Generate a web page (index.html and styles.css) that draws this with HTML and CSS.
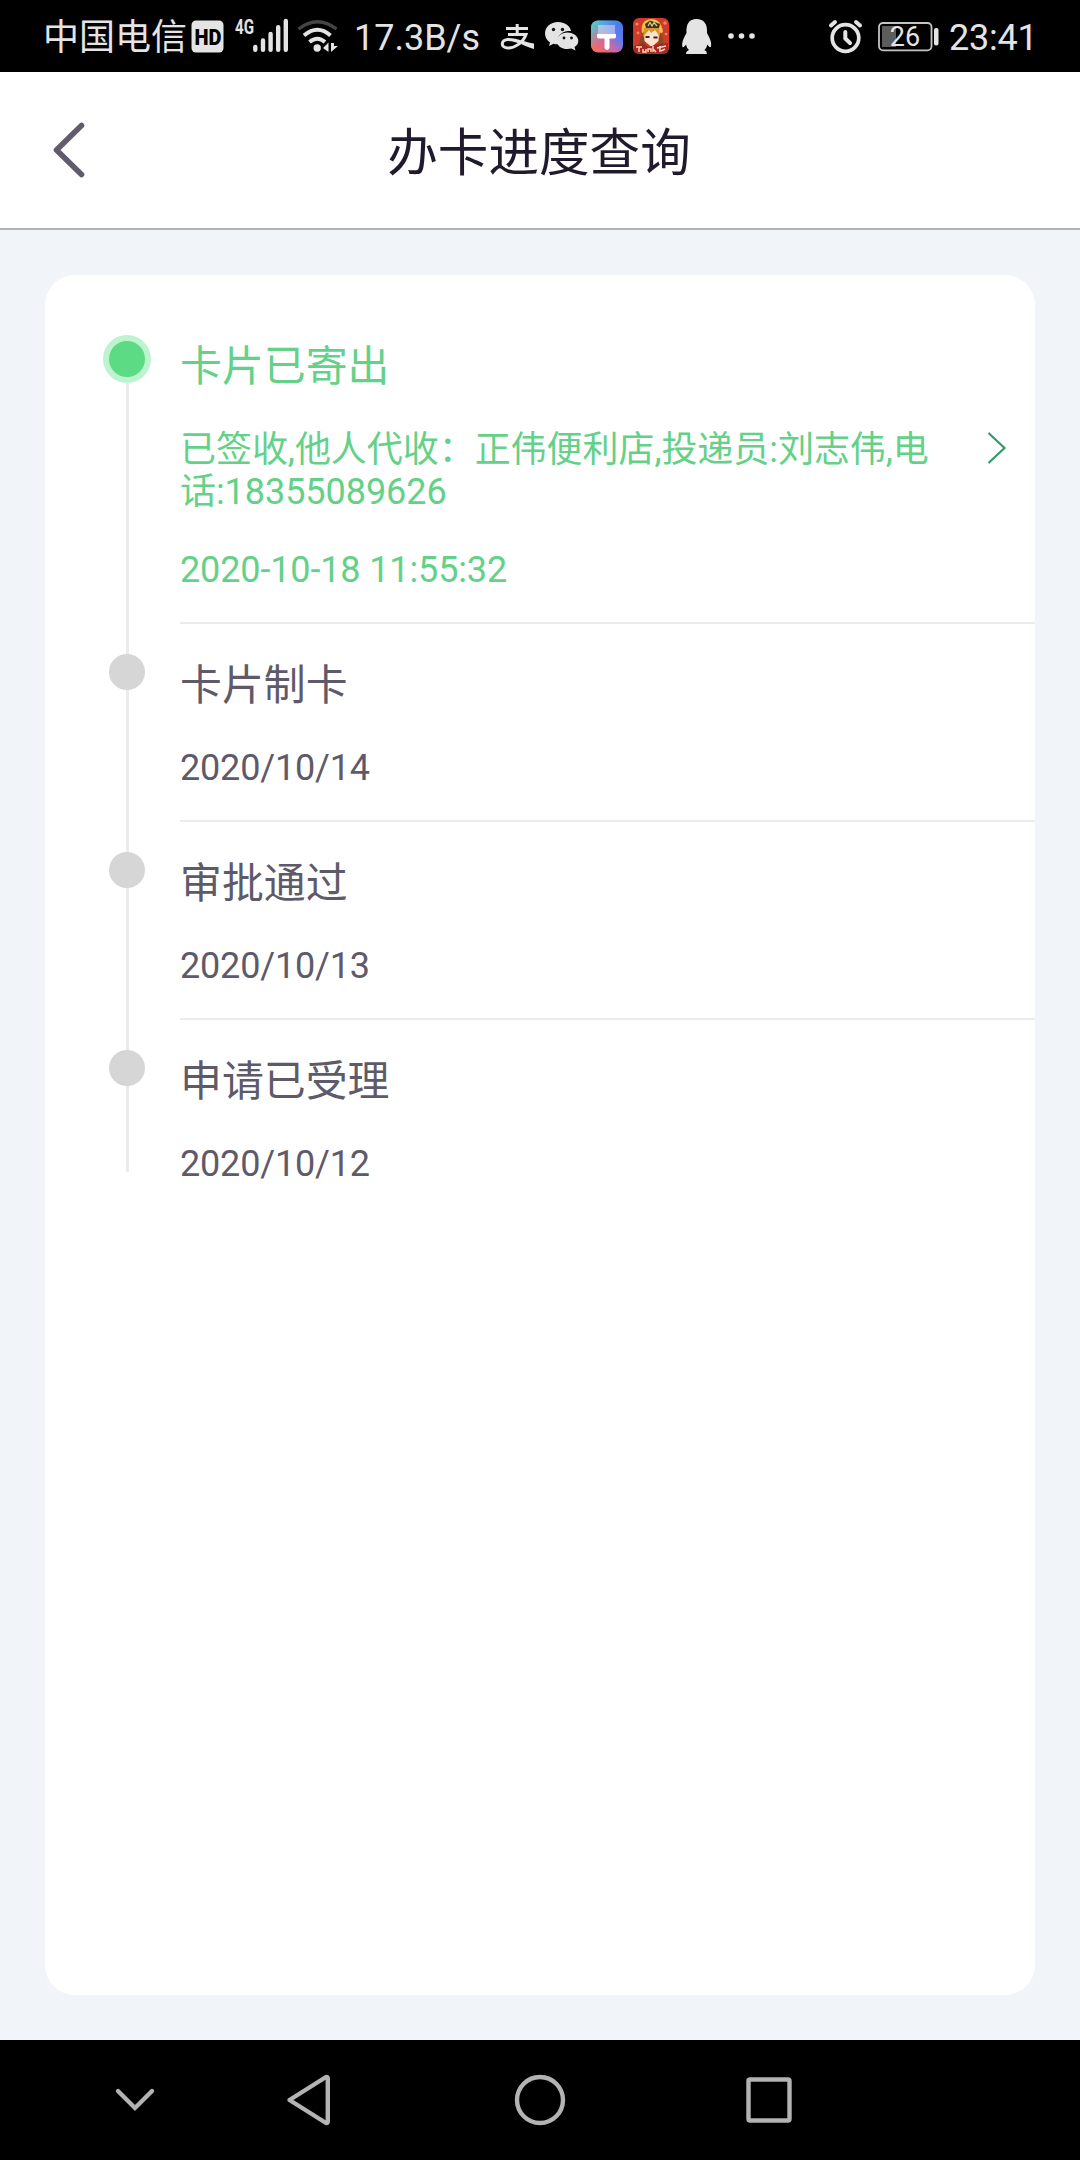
FILE: index.html
```html
<!DOCTYPE html>
<html lang="zh-CN">
<head>
<meta charset="utf-8">
<title>办卡进度查询</title>
<link rel="stylesheet" href="styles.css">
</head>
<body>
<div class="status">
  <span class="carrier">中国电信</span>
  <svg class="signals" width="155" height="72" viewBox="187 0 155 72">
    <rect x="191.5" y="20.5" width="32" height="32" rx="4.5" fill="#e4e4e4"/>
    <text x="194.5" y="44.500" class="hd" textLength="27" lengthAdjust="spacingAndGlyphs">HD</text>
    <text x="235" y="34" class="net" textLength="19" lengthAdjust="spacingAndGlyphs">4G</text>
    <g stroke="#e4e4e4" stroke-width="4.4" stroke-linecap="round">
      <path d="M255.3 47V49.8M263 40.4V49.8M270.6 34V49.8M278.2 27.2V49.8M285.8 21V49.8"/>
    </g>
    <g fill="none" stroke="#e4e4e4" stroke-width="4">
      <path d="M298.5 29Q317.500 14.500 336.500 29" stroke="#454545" stroke-width="3.4"/>
      <path d="M304 35.500Q317.500 24 330.500 35.500"/>
      <path d="M309.500 42Q317.500 35.500 325 42"/>
    </g>
    <circle cx="317.2" cy="48" r="3.7" fill="#e4e4e4"/>
    <path d="M323 48L328.500 42.500V52ZM331 43L331 52L338 46H334V43Z" fill="#e4e4e4"/>
  </svg>
  <span class="speed">17.3B/s</span>
  <svg class="apps" width="270" height="72" viewBox="495 0 270 72">
    <defs>
      <linearGradient id="brush" x1="0" y1="1" x2="1" y2="0"><stop offset="0" stop-color="#ff7043"/><stop offset=".38" stop-color="#d565a0"/><stop offset=".65" stop-color="#647bea"/><stop offset="1" stop-color="#3d79ee"/></linearGradient>
      <linearGradient id="mint" x1="0" y1="0" x2=".65" y2=".65"><stop offset="0" stop-color="#48dcc0"/><stop offset=".75" stop-color="#48c4e0" stop-opacity="0"/></linearGradient>
    </defs>
    <g fill="none" stroke="#e4e4e4" stroke-width="3">
      <path d="M506 28.500H528M517.200 24V34M508 34.500H526C523 43 514 48.500 507.500 48C500 47.500 501 39.500 508 39.500"/>
    </g>
    <path d="M507 38C517 37.500 525 42.500 534 43.500V49C525 46.500 516 40.500 507 41Z" fill="#e4e4e4"/>
    <g fill="#e4e4e4">
      <path d="M558 22C550.500 22 545 27 545 33.500C545 37.500 547 40.500 550 42.500L549 46L553.500 43.700C555 44.200 557 44.500 559 44.300C555 36 563 30 571 31C570 25.500 564.500 22 558 22Z"/>
      <path d="M567.500 32.500C561.500 32.500 557 36.500 557 41.200C557 46 561.500 49 567.500 49L571.500 48.500L575.500 50.500L574.500 47C577 45.500 578.300 43.500 578.300 41C578.300 36.300 573.500 32.500 567.500 32.500Z"/>
      <g fill="#111"><circle cx="553.5" cy="29.500" r="1.7"/><circle cx="562.5" cy="29.500" r="1.7"/><circle cx="564" cy="38" r="1.4"/><circle cx="571.5" cy="38" r="1.4"/></g>
    </g>
    <rect x="591" y="20.500" width="32" height="32" rx="7" fill="url(#brush)"/>
    <rect x="591" y="20.500" width="32" height="32" rx="7" fill="url(#mint)"/>
    <path d="M598 25H615V34H598Z" fill="#fff" opacity=".4"/>
    <path d="M597 34H616V36.500Q616 38.500 613 38.500H609.500V48Q607 52 604.500 48V38.500H600Q597 38.500 597 36.500Z" fill="#fff"/>
    <rect x="633" y="18" width="36" height="36" rx="6" fill="#cf3a2d"/>
    <g fill="#f08a5c"><circle cx="637" cy="24" r="1.600"/><circle cx="638" cy="33" r="1.400"/><circle cx="665" cy="23" r="1.800"/><circle cx="666" cy="34" r="1.300"/></g>
    <path d="M642 33Q640 20 651 19Q661 19 663 32L660 34H644Z" fill="#f3c244"/>
    <path d="M645 24L650 20.500L660 24L659 28H646Z" fill="#3d3323"/>
    <path d="M648 26L650 22.500L652 26L654 22.500L657 26" fill="none" stroke="#d8d387" stroke-width="1.200"/>
    <path d="M643 32Q638 41 640 48L646 46L645 33ZM660 32Q665 39 663 46L658 45Z" fill="#8a4b22"/>
    <path d="M644 32Q651 27 659 32L658.500 41L651.500 47L644.500 41Z" fill="#fbe4cf"/>
    <path d="M643 37L649 30L651 33L655 30L660 37L659 28H644Z" fill="#dd9430"/>
    <path d="M645.500 37H649.500M653.500 37.500H657.500" stroke="#4a1d19" stroke-width="2"/>
    <path d="M634 46L643 43L649 47L658 44L668 43V49Q668 53.500 663 53.500H639Q634 53.500 634 49Z" fill="#a52822"/>
    <path d="M636 47H642M639 47V52M643 49V52H646V49M648 52V49H651V52M653 46V52M653 49L656 52M660 46V52M657 48L666 46M661 51L665 49" fill="none" stroke="#ffd9ba" stroke-width="1.400"/>
    <path d="M696.500 19C689 19 686 24 686.500 33C683 39 681.500 43 682.500 47C683.500 48 685 46 686 44.500Q686.500 48 689 50Q686 51 686 54H707Q707 51 704.500 50Q706.500 48 707.500 44.500C709 47 710.500 48 711 46.500C712 42 709.500 38 707 33C707.500 24 704 19 696.500 19Z" fill="#e4e4e4"/>
    <g fill="#e4e4e4"><circle cx="731" cy="36" r="2.800"/><circle cx="741.5" cy="36" r="2.800"/><circle cx="752" cy="36" r="2.800"/></g>
  </svg>
  <svg class="power" width="120" height="72" viewBox="822 0 120 72">
    <g fill="none" stroke="#e4e4e4" stroke-width="4" stroke-linecap="round">
      <circle cx="845.5" cy="38" r="13.300" stroke-width="3.700"/>
      <path d="M845.300 32V38.500L850 43" stroke-linejoin="round"/>
      <path d="M831 25.500L835 22M860 25.500L856 22"/>
    </g>
    <rect x="879" y="23" width="52.500" height="27.300" rx="4" fill="none" stroke="#c4c4c4" stroke-width="1.800"/>
    <rect x="882" y="26" width="14" height="21" fill="#5c5c5c"/>
    <rect x="934" y="28" width="4.500" height="17.500" rx="2" fill="#e4e4e4"/>
    <text x="905" y="46" class="pct" text-anchor="middle">26</text>
  </svg>
  <span class="clock">23:41</span>
</div>

<header class="bar">
  <svg class="back" width="34" height="60" viewBox="0 0 34 60"><path d="M30.500 5.500L5.500 30L30.500 54.500" fill="none" stroke="#625b6c" stroke-width="5.600" stroke-linecap="round" stroke-linejoin="round"/></svg>
  <h1 class="title">办卡进度查询</h1>
</header>

<main class="page">
  <ol class="card">
    <li class="step current">
      <div class="rail"><i class="dot"></i></div>
      <div class="body">
        <h2 class="name">卡片已寄出</h2>
        <div class="info">
          <p class="detail">已签收,他人代收：正伟便利店,投递员:刘志伟,电话:18355089626</p>
          <svg class="more" width="24" height="36" viewBox="0 0 24 36"><path d="M3.500 3L19.500 18L3.500 33" fill="none" stroke="#35996a" stroke-width="2.200"/></svg>
        </div>
        <time class="date">2020-10-18 11:55:32</time>
      </div>
    </li>
    <li class="step">
      <div class="rail"><i class="dot"></i></div>
      <div class="body"><h2 class="name">卡片制卡</h2><time class="date">2020/10/14</time></div>
    </li>
    <li class="step">
      <div class="rail"><i class="dot"></i></div>
      <div class="body"><h2 class="name">审批通过</h2><time class="date">2020/10/13</time></div>
    </li>
    <li class="step last">
      <div class="rail"><i class="dot"></i></div>
      <div class="body"><h2 class="name">申请已受理</h2><time class="date">2020/10/12</time></div>
    </li>
  </ol>
</main>

<nav class="nav">
  <svg width="1080" height="120" viewBox="0 0 1080 120" fill="none" stroke="#b3b3b3" stroke-width="4.400" stroke-linejoin="round" stroke-linecap="round">
    <path d="M118 51L135 68L152 51" stroke-linejoin="miter"/>
    <path d="M289.500 60L326 37Q327.800 36.500 327.800 38.500V81.500Q327.800 83.500 326 83L289.500 60Z"/>
    <circle cx="540" cy="60" r="23"/>
    <rect x="748.5" y="39.500" width="41" height="41" rx="1.500"/>
  </svg>
</nav>
</body>
</html>
```
FILE: styles.css
```css
* { box-sizing: border-box; margin: 0; padding: 0; }
body {
  width: 1080px;
  height: 2160px;
  display: flex;
  flex-direction: column;
  background: #f1f4f9;
  font-family: Roboto, "Noto Sans CJK SC", sans-serif;
  overflow: hidden;
}
svg { display: block; flex: none; }
.status {
  height: 72px;
  flex: none;
  display: flex;
  background: #000;
  color: #e4e4e4;
  font-size: 36px;
  line-height: 76px;
  white-space: nowrap;
}
.carrier { width: 144px; margin-left: 43px; }
.speed { width: 141px; margin-left: 12px; }
.power { margin-left: 57px; }
.clock { margin-left: 7px; letter-spacing: -.2px; }
.hd { font: 900 22px Roboto, sans-serif; fill: #000; }
.net { font: 700 20px Roboto, sans-serif; fill: #e4e4e4; }
.pct { font: 400 27px Roboto, sans-serif; fill: #e4e4e4; }

.bar {
  height: 158px;
  flex: none;
  display: grid;
  grid-template-columns: 120px 1fr 120px;
  align-items: center;
  background: #fff;
  border-bottom: 2px solid #b2b2b2;
}
.back { margin-left: 51px; }
.title {
  padding: 8px 2px 0 0;
  text-align: center;
  font-size: 50.6px;
  font-weight: 400;
  line-height: 76px;
  color: #211a2c;
}

.page { flex: 1; padding: 45px; display: flex; }
.card {
  flex: 1;
  list-style: none;
  background: #fff;
  border-radius: 30px;
  padding-top: 36px;
}
.step { display: grid; grid-template-columns: 135px 1fr; height: 198px; color: #5f5a69; }
.rail {
  padding: 30px 0 0 64px;
  background: linear-gradient(#ebebeb, #ebebeb) 81px 0 / 3px 100% no-repeat;
}
.dot { display: block; width: 36px; height: 36px; border-radius: 50%; background: #d6d6d6; }
.body { border-bottom: 2px solid #ebebeb; padding-top: 31px; }
.name { font-size: 41.9px; font-weight: 400; line-height: 62px; height: 62px; }
.date { display: block; font-size: 36px; line-height: 42px; margin-top: 30px; letter-spacing: -.18px; }
.current { height: 313px; color: #64d188; }
.current .rail { background-position: 81px 48px; }
.current .dot { background: #5cdb84; box-shadow: 0 0 0 6px #bdf3ce; }
.current .body { padding-top: 25px; }
.current .date { margin-top: 36px; letter-spacing: -.13px; }
.info { display: flex; align-items: flex-start; margin-top: 31px; }
.detail { width: 760px; font-size: 36px; line-height: 42px; letter-spacing: -.05px; }
.more { margin: 1px 0 0 45px; }
.last .body { border-bottom: 0; }
.last .rail { background-size: 3px 152px; }

.nav { height: 120px; flex: none; background: #000; }
```
